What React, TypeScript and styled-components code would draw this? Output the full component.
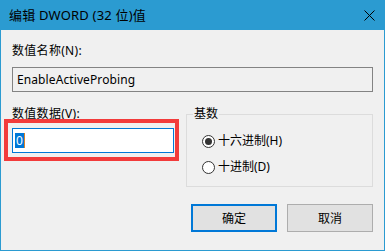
import React from "react";
import styled, { createGlobalStyle } from "styled-components";

const Global = createGlobalStyle`
  html, body {
    margin: 0;
    padding: 0;
    background: #f0f0f0;
  }
  * {
    box-sizing: border-box;
  }
`;

const font = `"Noto Sans", "Noto Sans CJK SC", sans-serif`;
const blue = "#2b9bd1";

const Window = styled.div`
  width: 385px;
  height: 251px;
  border: 1px solid ${blue};
  border-top: none;
  background: #f0f0f0;
  font-family: ${font};
  font-size: 12px;
  color: #000;
  display: flex;
  flex-direction: column;
`;

const TitleBar = styled.div`
  height: 30px;
  margin: 0 -1px;
  background: ${blue};
  display: flex;
  align-items: center;
  justify-content: space-between;
  padding: 0 10px 0 9px;
`;

const Title = styled.span`
  font-size: 13px;
  line-height: 16px;
  letter-spacing: 0.2px;
  color: #000;
`;

const Body = styled.div`
  padding: 13px 11px 0 11px;
  display: flex;
  flex-direction: column;
`;

const Label = styled.div`
  line-height: 16px;
  letter-spacing: 0.3px;
  white-space: nowrap;
`;

const Field = styled.div<{ $focused?: boolean }>`
  height: 25px;
  border: 1px solid ${(p) => (p.$focused ? "#0078d7" : "#838383")};
  background: ${(p) => (p.$focused ? "#fff" : "#f0f0f0")};
  display: flex;
  align-items: center;
  padding: 0 4px;
  line-height: 15px;
`;

const NameField = styled(Field)`
  margin-top: 8px;
  letter-spacing: 0.1px;
`;

const Row = styled.div`
  display: flex;
  gap: 12px;
  margin-top: 14px;
`;

const LeftCol = styled.div`
  width: 162px;
  display: flex;
  flex-direction: column;
`;

const Highlight = styled.div`
  position: relative;
  margin-top: 6px;
  &::after {
    content: "";
    position: absolute;
    top: -9px;
    left: -8px;
    right: -5px;
    bottom: -8px;
    border: 4px solid #f23b3b;
    pointer-events: none;
  }
`;

const DataField = styled(Field)`
  padding-left: 2px;
`;

const Selected = styled.span`
  background: #0078d7;
  color: #fff;
  padding: 0 1px;
`;

const Caret = styled.span`
  width: 1px;
  height: 15px;
  background: #d9822b;
`;

const GroupBox = styled.fieldset`
  flex: 1;
  height: 81px;
  margin: 0;
  padding: 0 6px;
  border: 1px solid #dcdcdc;
`;

const Legend = styled.legend`
  padding: 0 1px;
  line-height: 16px;
`;

const RadioList = styled.div`
  display: flex;
  flex-direction: column;
  gap: 10px;
  padding: 11px 0 0 9px;
`;

const RadioRow = styled.label`
  display: flex;
  align-items: center;
  gap: 3px;
  line-height: 16px;
`;

const RadioDot = styled.span<{ $checked?: boolean }>`
  width: 13px;
  height: 13px;
  border-radius: 50%;
  border: 1px solid #333;
  background: #fff;
  display: flex;
  align-items: center;
  justify-content: center;
  &::after {
    content: "";
    width: 7px;
    height: 7px;
    border-radius: 50%;
    background: ${(p) => (p.$checked ? "#333" : "transparent")};
  }
`;

const Buttons = styled.div`
  display: flex;
  justify-content: flex-end;
  gap: 10px;
  margin-top: 17px;
`;

const Button = styled.button<{ $primary?: boolean }>`
  width: 86px;
  height: 28px;
  margin: 0;
  padding: 0;
  font-family: ${font};
  font-size: 12px;
  color: #000;
  background: #e1e1e1;
  border: ${(p) => (p.$primary ? "2px solid #0078d7" : "1px solid #adadad")};
`;

function CloseIcon() {
  return (
    <svg width="11" height="11" viewBox="0 0 11 11">
      <path d="M0.5 0.5 L10.5 10.5 M10.5 0.5 L0.5 10.5" stroke="#000" strokeWidth="1" />
    </svg>
  );
}

export default function App() {
  return (
    <>
      <Global />
      <Window>
        <TitleBar>
          <Title>编辑 DWORD (32 位)值</Title>
          <CloseIcon />
        </TitleBar>
        <Body>
          <Label>数值名称(N):</Label>
          <NameField>EnableActiveProbing</NameField>
          <Row>
            <LeftCol>
              <Label>数值数据(V):</Label>
              <Highlight>
                <DataField $focused>
                  <Selected>0</Selected>
                  <Caret />
                </DataField>
              </Highlight>
            </LeftCol>
            <GroupBox>
              <Legend>基数</Legend>
              <RadioList>
                <RadioRow>
                  <RadioDot $checked />
                  十六进制(H)
                </RadioRow>
                <RadioRow>
                  <RadioDot />
                  十进制(D)
                </RadioRow>
              </RadioList>
            </GroupBox>
          </Row>
          <Buttons>
            <Button $primary>确定</Button>
            <Button>取消</Button>
          </Buttons>
        </Body>
      </Window>
    </>
  );
}
